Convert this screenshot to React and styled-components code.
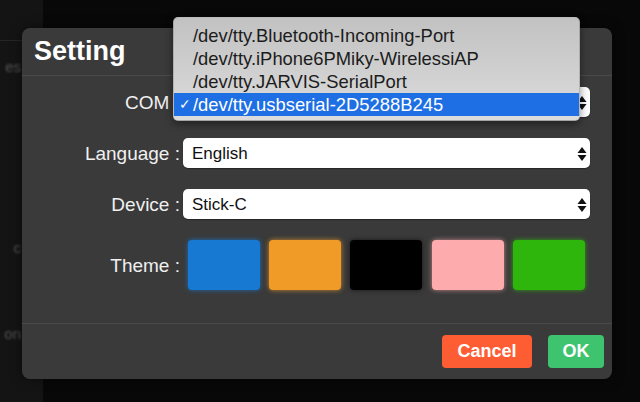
import React from "react";
import styled, { createGlobalStyle } from "styled-components";

const GlobalStyle = createGlobalStyle`
  html, body {
    margin: 0;
    padding: 0;
    background: #080808;
    font-family: "Liberation Sans", Arial, Helvetica, sans-serif;
  }
`;

const Page = styled.div`
  position: relative;
  width: 640px;
  height: 402px;
  overflow: hidden;
  background: #080808;
`;

const Sidebar = styled.div`
  width: 43px;
  height: 100%;
  background: #141414;
  display: flex;
  flex-direction: column;
  overflow: hidden;
`;

const SideRule = styled.div`
  height: 1px;
  width: 22px;
  margin-top: 40px;
  background: #262626;
  filter: blur(0.6px);
`;

const SideItem = styled.div`
  width: 21px;
  margin-top: ${props => props.gap}px;
  text-align: right;
  font-size: 15px;
  color: #555555;
  white-space: nowrap;
  filter: blur(1.3px);
  line-height: 18px;
`;

const Modal = styled.div`
  position: absolute;
  left: 22px;
  top: 28px;
  width: 590px;
  height: 351px;
  background: #3a3a3a;
  border-radius: 8px;
  display: flex;
  flex-direction: column;
  box-shadow: 0 0 12px rgba(0, 0, 0, 0.5);
`;

const Header = styled.div`
  height: 47px;
  display: flex;
  align-items: center;
  padding-left: 12px;
  border-bottom: 1px solid #4a4a4a;
`;

const Title = styled.h1`
  margin: 0;
  font-size: 27px;
  font-weight: bold;
  color: #ffffff;
`;

const Body = styled.div`
  flex: 1;
  display: flex;
  flex-direction: column;
  gap: 21px;
  padding: 11px 22px 32px 0;
`;

const Row = styled.div`
  display: flex;
  align-items: center;
  gap: 3px;
  height: ${props => props.h || 30}px;
`;

const Label = styled.div`
  width: 158px;
  flex-shrink: 0;
  text-align: right;
  font-size: 19px;
  color: #f0f0f0;
  padding-top: 2px;
  white-space: nowrap;
`;

const Field = styled.div`
  position: relative;
  flex: 1;
  height: 100%;
`;

const SelectBox = styled.div`
  height: 30px;
  box-sizing: border-box;
  background: #ffffff;
  border-radius: 5px;
  box-shadow: 0 1px 1px rgba(0, 0, 0, 0.35);
  display: flex;
  align-items: center;
  justify-content: space-between;
  padding: 1px 3px 0 9px;
  font-size: 17px;
  color: #111;
`;

const Menu = styled.ul`
  position: absolute;
  left: -10px;
  top: -70px;
  width: 407px;
  margin: 0;
  padding: 6px 0 4px;
  list-style: none;
  border-radius: 5px;
  background: linear-gradient(#c2c2c2, #dcdcdc);
  border: 1px solid rgba(0, 0, 0, 0.15);
  box-sizing: border-box;
  box-shadow: 0 3px 8px rgba(0, 0, 0, 0.45);
  z-index: 2;
`;

const MenuItem = styled.li`
  position: relative;
  height: 23px;
  display: flex;
  align-items: center;
  padding-left: 19px;
  font-size: 18.4px;
  color: ${props => (props.selected ? "#ffffff" : "#1c1c1c")};
  background: ${props => (props.selected ? "#1e6fe3" : "transparent")};
  white-space: nowrap;
`;

const Check = styled.span`
  position: absolute;
  left: 5px;
  top: 3px;
  font-size: 14px;
`;

const Swatches = styled.div`
  flex: 1;
  height: 50px;
  display: flex;
  justify-content: space-around;
`;

const Swatch = styled.div`
  width: 72px;
  height: 50px;
  border-radius: 4px;
  background: ${props => props.color};
  box-shadow: 0 0 5px ${props => props.glow};
`;

const Footer = styled.div`
  height: 56px;
  box-sizing: border-box;
  border-top: 1px solid #4a4a4a;
  display: flex;
  justify-content: flex-end;
  align-items: flex-start;
  gap: 16px;
  padding: 11px 8px 0 0;
`;

const Button = styled.button`
  height: 33px;
  width: ${props => props.w}px;
  border: none;
  border-radius: 4px;
  background: ${props => props.bg};
  color: #ffffff;
  font-family: inherit;
  font-size: 18px;
  font-weight: bold;
  padding: 0;
`;

function Arrows() {
  return (
    <svg width="10" height="16" viewBox="0 0 10 16">
      <path d="M5 1 L9.5 7 L0.5 7 Z" fill="#111" />
      <path d="M5 15 L9.5 9 L0.5 9 Z" fill="#111" />
    </svg>
  );
}

function Select({ value }) {
  return (
    <SelectBox>
      <span>{value}</span>
      <Arrows />
    </SelectBox>
  );
}

const ports = [
  "/dev/tty.Bluetooth-Incoming-Port",
  "/dev/tty.iPhone6PMiky-WirelessiAP",
  "/dev/tty.JARVIS-SerialPort",
  "/dev/tty.usbserial-2D5288B245",
];

const themes = [
  { color: "#1779d2", glow: "rgba(23,121,210,0.8)" },
  { color: "#f09b28", glow: "rgba(240,155,40,0.8)" },
  { color: "#000000", glow: "rgba(0,0,0,0.6)" },
  { color: "#feabae", glow: "rgba(254,171,174,0.7)" },
  { color: "#2eb60c", glow: "rgba(46,182,12,0.8)" },
];

export default function App() {
  return (
    <Page>
      <GlobalStyle />
      <Sidebar>
        <SideRule />
        <SideItem gap={17}>es</SideItem>
        <SideItem gap={163}>c</SideItem>
        <SideItem gap={68}>on</SideItem>
      </Sidebar>
      <Modal>
        <Header>
          <Title>Setting</Title>
        </Header>
        <Body>
          <Row>
            <Label>COM :</Label>
            <Field>
              <Select value={ports[3]} />
              <Menu>
                {ports.map((p, i) => (
                  <MenuItem key={p} selected={i === 3}>
                    {i === 3 && <Check>✓</Check>}
                    {p}
                  </MenuItem>
                ))}
              </Menu>
            </Field>
          </Row>
          <Row>
            <Label>Language :</Label>
            <Field>
              <Select value="English" />
            </Field>
          </Row>
          <Row>
            <Label>Device :</Label>
            <Field>
              <Select value="Stick-C" />
            </Field>
          </Row>
          <Row h={50}>
            <Label>Theme :</Label>
            <Swatches>
              {themes.map(t => (
                <Swatch key={t.color} color={t.color} glow={t.glow} />
              ))}
            </Swatches>
          </Row>
        </Body>
        <Footer>
          <Button w={90} bg="#fe5d33">Cancel</Button>
          <Button w={56} bg="#3ec46e">OK</Button>
        </Footer>
      </Modal>
    </Page>
  );
}
